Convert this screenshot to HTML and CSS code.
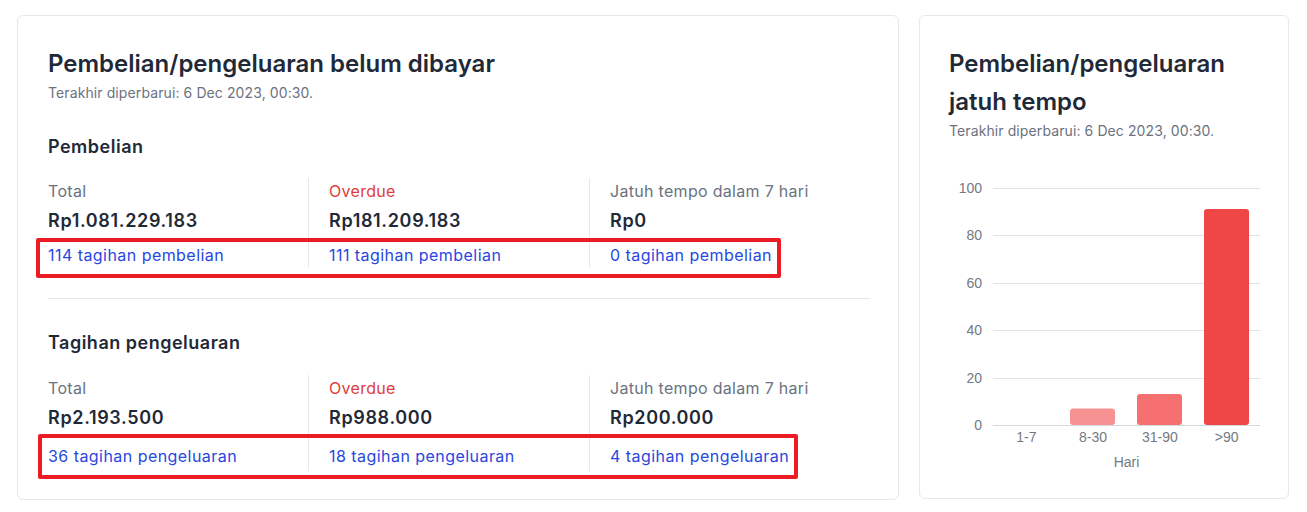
FILE: index.html
```html
<!DOCTYPE html>
<html lang="en">
<head>
    <meta charset="UTF-8">
    <meta name="viewport" content="width=device-width, initial-scale=1.0">
    <title>Pembelian/pengeluaran</title>
    <link rel="stylesheet" href="styles.css">
</head>
<body>
    <div class="dashboard">
        <div class="card card-unpaid">
            <h2 class="card-title">Pembelian/pengeluaran belum dibayar</h2>
            <p class="updated">Terakhir diperbarui: 6 Dec 2023, 00:30.</p>

            <div class="section section-purchase">
                <h3 class="section-title">Pembelian</h3>
                <div class="stats">
                    <div class="stat">
                        <span class="stat-label">Total</span>
                        <span class="stat-value">Rp1.081.229.183</span>
                        <a class="stat-link" href="#">114 tagihan pembelian</a>
                    </div>
                    <div class="stat">
                        <span class="stat-label overdue">Overdue</span>
                        <span class="stat-value">Rp181.209.183</span>
                        <a class="stat-link" href="#">111 tagihan pembelian</a>
                    </div>
                    <div class="stat">
                        <span class="stat-label">Jatuh tempo dalam 7 hari</span>
                        <span class="stat-value">Rp0</span>
                        <a class="stat-link" href="#">0 tagihan pembelian</a>
                    </div>
                    <div class="mark mark-first"></div>
                </div>
            </div>

            <hr class="divider">

            <div class="section">
                <h3 class="section-title">Tagihan pengeluaran</h3>
                <div class="stats stats-expense">
                    <div class="stat">
                        <span class="stat-label">Total</span>
                        <span class="stat-value">Rp2.193.500</span>
                        <a class="stat-link" href="#">36 tagihan pengeluaran</a>
                    </div>
                    <div class="stat">
                        <span class="stat-label overdue">Overdue</span>
                        <span class="stat-value">Rp988.000</span>
                        <a class="stat-link" href="#">18 tagihan pengeluaran</a>
                    </div>
                    <div class="stat">
                        <span class="stat-label">Jatuh tempo dalam 7 hari</span>
                        <span class="stat-value">Rp200.000</span>
                        <a class="stat-link" href="#">4 tagihan pengeluaran</a>
                    </div>
                    <div class="mark mark-second"></div>
                </div>
            </div>
        </div>

        <div class="card card-due">
            <h2 class="card-title">Pembelian/pengeluaran jatuh tempo</h2>
            <p class="updated">Terakhir diperbarui: 6 Dec 2023, 00:30.</p>

            <svg class="chart" width="310" height="300" viewBox="0 0 310 300">
                <g class="grid">
                    <line x1="44" y1="18.5" x2="311" y2="18.5"/>
                    <line x1="44" y1="65.5" x2="311" y2="65.5"/>
                    <line x1="44" y1="113.5" x2="311" y2="113.5"/>
                    <line x1="44" y1="160.5" x2="311" y2="160.5"/>
                    <line x1="44" y1="208.5" x2="311" y2="208.5"/>
                    <line class="zero" x1="44" y1="255.5" x2="311" y2="255.5"/>
                </g>
                <g class="ticks ticks-y">
                    <text x="33" y="23">100</text>
                    <text x="33" y="70">80</text>
                    <text x="33" y="118">60</text>
                    <text x="33" y="165">40</text>
                    <text x="33" y="213">20</text>
                    <text x="33" y="260">0</text>
                </g>
                <rect class="bar bar-1" x="121" y="238.4" width="45" height="16.6" rx="3"/>
                <rect class="bar bar-2" x="188" y="224.1" width="45" height="30.9" rx="3"/>
                <rect class="bar bar-3" x="255" y="38.9" width="45" height="216.1" rx="3"/>
                <g class="ticks ticks-x">
                    <text x="77.4" y="271.5">1-7</text>
                    <text x="144.1" y="271.5">8-30</text>
                    <text x="210.9" y="271.5">31-90</text>
                    <text x="277.6" y="271.5">&gt;90</text>
                    <text x="177.5" y="297">Hari</text>
                </g>
            </svg>
        </div>
    </div>
</body>
</html>
```

FILE: styles.css
```css
:root {
    --text-color: #1f2937;
    --muted-color: #6b7280;
    --border-color: #e5e7eb;
    --link-color: #2847e0;
    --danger-color: #e03c3c;
    --mark-color: #ec1c24;
}

* {
    margin: 0;
    padding: 0;
    box-sizing: border-box;
}

body {
    font-family: Inter, 'Noto Sans', sans-serif;
    background-color: #fff;
    color: var(--text-color);
}

.dashboard {
    display: flex;
    align-items: flex-start;
    gap: 20px;
    padding: 15px 18px 13px 17px;
}

.card {
    background-color: #fff;
    border: 1px solid var(--border-color);
    border-radius: 6px;
    padding: 29px 30px 28px;
}

.card-unpaid {
    width: 882px;
}

.card-due {
    width: 370px;
    padding-left: 29px;
    padding-right: 28px;
}

.card-title {
    font-size: 24px;
    font-weight: 600;
    line-height: 38px;
    color: var(--text-color);
}

.updated {
    margin-top: 1px;
    font-size: 14px;
    line-height: 18px;
    letter-spacing: 0.1px;
    color: var(--muted-color);
}

.section-title {
    font-size: 18px;
    font-weight: 600;
    line-height: 26px;
    letter-spacing: 0.5px;
}

.section-purchase .section-title {
    margin-top: 32px;
}

.stats {
    position: relative;
    display: grid;
    grid-template-columns: 260px 281px 281px;
    margin-top: 18px;
}

.stat {
    display: flex;
    flex-direction: column;
    padding: 0 20px;
    border-left: 1px solid var(--border-color);
}

.stat:first-child {
    padding-left: 0;
    border-left: none;
}

.stat-label {
    font-size: 16px;
    line-height: 26px;
    letter-spacing: 0.3px;
    color: var(--muted-color);
}

.stat-label.overdue {
    color: var(--danger-color);
}

.stat-value {
    margin-top: 2px;
    font-size: 18px;
    font-weight: 600;
    line-height: 30px;
    letter-spacing: 0.65px;
}

.stat-link {
    margin-top: 7px;
    font-size: 16px;
    line-height: 24px;
    letter-spacing: 0.45px;
    color: var(--link-color);
    text-decoration: none;
    white-space: nowrap;
}

.stats-expense {
    margin-top: 19px;
}

.stats-expense .stat-link {
    margin-top: 11px;
}

.stats-expense .stat {
    padding-bottom: 3px;
}

/* red highlight boxes drawn over the link rows */
.mark {
    position: absolute;
    border: 4px solid var(--mark-color);
    border-radius: 2px;
    pointer-events: none;
}

.mark-first {
    left: -12px;
    top: 60px;
    width: 745px;
    height: 40px;
}

.mark-second {
    left: -10px;
    top: 59px;
    width: 760px;
    height: 45px;
}

.divider {
    width: 822px;
    margin: 31px 0;
    border: none;
    border-top: 1px solid var(--border-color);
}

.chart {
    display: block;
    margin-top: 30px;
    overflow: visible;
}

.grid line {
    stroke: #e0e3ea;
    stroke-width: 1;
}

.grid .zero {
    stroke: #d3d7df;
}

.ticks text {
    font-family: 'Liberation Sans', Arial, sans-serif;
    font-size: 14px;
    fill: #737985;
}

.ticks-y text {
    text-anchor: end;
}

.ticks-x text {
    text-anchor: middle;
}

.bar-1 {
    fill: #f79292;
}

.bar-2 {
    fill: #f77070;
}

.bar-3 {
    fill: #ef4646;
}
```
